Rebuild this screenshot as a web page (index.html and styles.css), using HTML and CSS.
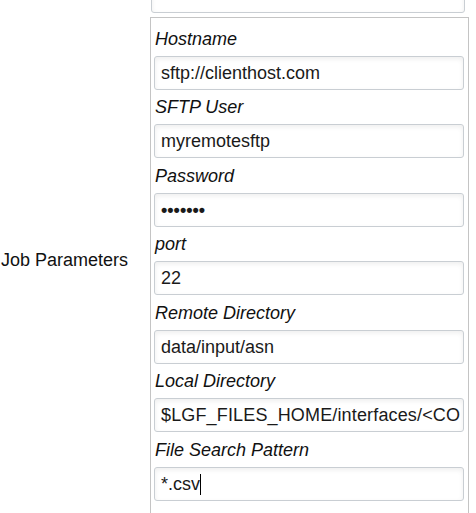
FILE: index.html
```html
<!DOCTYPE html>
<html>
<head>
<meta charset="utf-8">
<link rel="stylesheet" href="styles.css">
</head>
<body>
<div class="form">
  <div class="row row-prev">
    <div class="label-cell"></div>
    <div class="value-cell"><div class="input prev-input"></div></div>
  </div>
  <div class="row">
    <div class="label-cell main-label">Job Parameters</div>
    <div class="value-cell">
      <div class="panel">
        <div class="field">
          <div class="field-label">Hostname</div>
          <div class="input">sftp://clienthost.com</div>
        </div>
        <div class="field">
          <div class="field-label">SFTP User</div>
          <div class="input">myremotesftp</div>
        </div>
        <div class="field">
          <div class="field-label">Password</div>
          <div class="input pwd">•••••••</div>
        </div>
        <div class="field">
          <div class="field-label">port</div>
          <div class="input">22</div>
        </div>
        <div class="field">
          <div class="field-label">Remote Directory</div>
          <div class="input">data/input/asn</div>
        </div>
        <div class="field">
          <div class="field-label">Local Directory</div>
          <div class="input wide">$LGF_FILES_HOME/interfaces/&lt;CO</div>
        </div>
        <div class="field">
          <div class="field-label">File Search Pattern</div>
          <div class="input">*.csv<span class="caret"></span></div>
        </div>
      </div>
    </div>
  </div>
</div>
</body>
</html>
```

FILE: styles.css
```css
html, body {
  margin: 0;
  padding: 0;
  background: #ffffff;
}
body {
  font-family: "Liberation Sans", Arial, sans-serif;
  font-size: 18px;
  color: #111;
  overflow: hidden;
}
.form {
  display: flex;
  flex-direction: column;
}
.row {
  display: grid;
  grid-template-columns: 150px 319px;
  align-items: center;
}
.row-prev {
  margin-top: -21px;
  margin-bottom: 4px;
}
.label-cell {
  padding-left: 1px;
  line-height: 21px;
  color: #111;
}
.main-label {
  padding-bottom: 16px;
}
.prev-input {
  margin-left: 1px;
  width: 314px;
  box-sizing: border-box;
}
.panel {
  border: 1px solid #c4c4c4;
  border-bottom: none;
  padding: 3px 4px 20px 3px;
}
.field {
  display: flex;
  flex-direction: column;
}
.field-label {
  font-style: italic;
  line-height: 21px;
  margin: 7.5px 0 6px 1px;
  color: #111;
}
.input {
  height: 34px;
  box-sizing: border-box;
  border: 1px solid #c9ced3;
  border-radius: 3px;
  background: #fff;
  box-shadow: inset 0 2px 5px rgba(0, 0, 0, 0.07);
  padding: 0 6px;
  line-height: 32px;
  white-space: nowrap;
  overflow: hidden;
  color: #1a1a1a;
}
.wide {
  letter-spacing: 0.15px;
}
.pwd {
  font-weight: bold;
}
.caret {
  display: inline-block;
  width: 1px;
  height: 21px;
  background: #000;
  vertical-align: -5px;
  margin-left: 0;
}
```
